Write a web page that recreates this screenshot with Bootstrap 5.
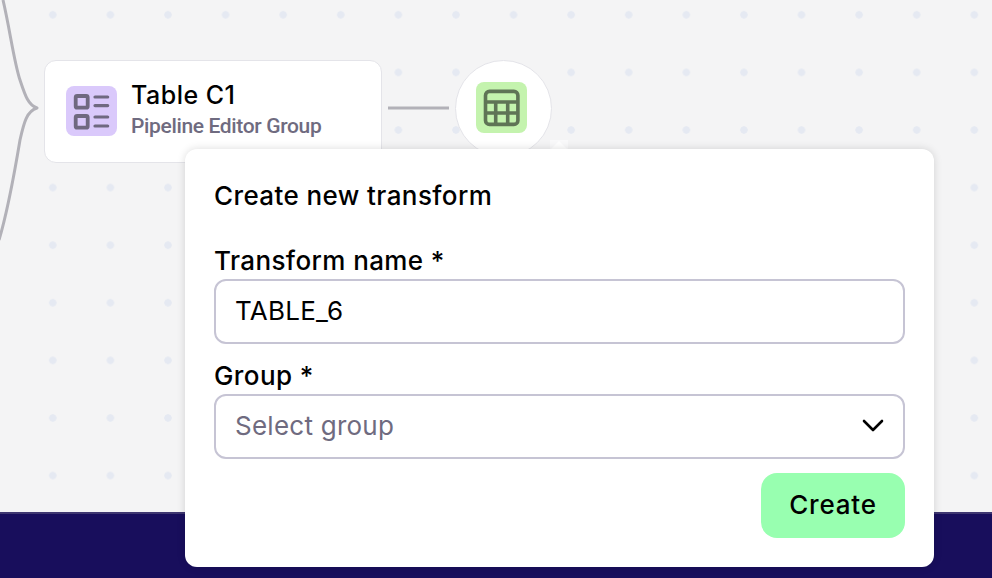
<!DOCTYPE html>
<html lang="en">
<head>
  <meta charset="UTF-8" />
  <meta name="viewport" content="width=device-width, initial-scale=1.0" />
  <title>Pipeline Editor</title>
  <link href="https://cdn.jsdelivr.net/npm/bootstrap@5.3.0/dist/css/bootstrap.min.css" rel="stylesheet">
  <style>
    html, body {
      height: 100%;
    }
    body {
      overflow: hidden;
      font-family: "Inter", "Liberation Sans", sans-serif;
      color: #000;
    }
    .editor-page {
      height: 578px;
    }
    .flow-canvas {
      position: relative;
      flex: 1 1 auto;
      background-color: #f4f4f5;
      background-image: radial-gradient(circle, #e5e9f2 3.4px, transparent 4px);
      background-size: 57.6px 57.6px;
      background-position: 24px -14px;
    }
    .footer-bar {
      flex: 0 0 66px;
      background: #180e5c;
      border-top: 2px solid #3e3670;
    }
    .edge-lines {
      position: absolute;
      left: 0;
      top: 0;
    }
    .table-node {
      position: absolute;
      left: 44px;
      top: 60px;
      width: 338px;
      height: 103px;
      padding-left: 21px;
      background: #fff;
      border: 1px solid #e4e4e9;
      border-radius: 12px;
    }
    .node-icon {
      flex: 0 0 51px;
      width: 51px;
      border-radius: 8px;
    }
    .icon-purple {
      height: 50px;
      margin-right: 14px;
      margin-bottom: 1px;
      background: #dac9fb;
    }
    .icon-green {
      height: 51px;
      margin-right: 4px;
      margin-bottom: 2px;
      background: #c4f3ae;
    }
    .node-title {
      font-size: 25px;
      font-weight: 500;
      line-height: 30px;
      letter-spacing: .5px;
      margin-bottom: 3px;
    }
    .node-sub {
      font-family: "Roboto", "Liberation Sans", sans-serif;
      font-size: 21px;
      font-weight: 500;
      line-height: 26px;
      color: #6f6b80;
      letter-spacing: -.35px;
    }
    .node-text {
      margin-bottom: 5px;
    }
    .add-circle {
      position: absolute;
      left: 455px;
      top: 60px;
      width: 97px;
      height: 97px;
      background: #fff;
      border: 1px solid #e4e4e9;
      border-radius: 50%;
    }
    .popup-arrow {
      position: absolute;
      left: 550px;
      top: 140px;
      width: 18px;
      height: 9px;
      background: #f9f9fa;
    }
    .popup-arrow::after {
      content: "";
      position: absolute;
      left: 1px;
      top: 1px;
      border-left: 8px solid transparent;
      border-right: 8px solid transparent;
      border-bottom: 8px solid #fff;
    }
    .transform-popup {
      position: absolute;
      left: 185px;
      top: 149px;
      width: 749px;
      height: 418px;
      padding: 30px 29px 0;
      background: #fff;
      border-radius: 12px;
      box-shadow: 0 0 8px rgba(0, 0, 0, .14);
    }
    .popup-title {
      font-size: 26px;
      font-weight: 500;
      line-height: 34px;
      letter-spacing: .4px;
      margin-bottom: 31px;
    }
    .field-label {
      display: block;
      font-size: 26px;
      font-weight: 500;
      line-height: 34px;
      letter-spacing: .4px;
      margin-bottom: 1px;
    }
    .field-input.form-control,
    .field-input.form-select {
      height: 65px;
      padding: 0 19px 2px;
      font-size: 26px;
      letter-spacing: .25px;
      color: #000;
      border: 2px solid #c6c4d4;
      border-radius: 12px;
      box-shadow: none;
      margin-bottom: 15px;
    }
    .field-input.form-select {
      color: #6f6b80;
      background-image: none;
    }
    .select-wrap {
      position: relative;
    }
    .select-chevron {
      position: absolute;
      right: 21px;
      top: 25px;
      pointer-events: none;
    }
    .btn-create.btn {
      width: 144px;
      height: 65px;
      margin-top: -1px;
      padding: 0 0 2px;
      font-size: 26px;
      font-weight: 500;
      letter-spacing: .8px;
      color: #000;
      background: #98ffb0;
      border: 0;
      border-radius: 16px;
    }
  </style>
</head>
<body>

<div class="editor-page d-flex flex-column">
  <div class="flow-canvas">
    <svg class="edge-lines" width="992" height="250" fill="none" stroke="#b2b1b8" stroke-width="3" stroke-linejoin="round">
      <path d="M3 0C10 30 14 62 20 80C25 95 28 105 37 108C27 111 24 122 20 140C15 170 8 210 -1 240" />
      <path d="M388 108H449" />
    </svg>

    <div class="table-node d-flex align-items-center">
      <div class="node-icon icon-purple">
        <svg class="d-block" width="51" height="50" viewBox="0 0 51 50" fill="none" stroke="#6f6880" stroke-linecap="round" stroke-linejoin="round">
          <rect x="9.7" y="10" width="12" height="11.7" rx="1.5" stroke-width="3.8" />
          <rect x="9.7" y="30" width="12" height="11.7" rx="1.5" stroke-width="3.8" />
          <path d="M29 11H41.7M29 19.6H41.7M29 31H41.7M29 40H41.7" stroke-width="3.2" />
        </svg>
      </div>
      <div class="node-text">
        <div class="node-title">Table C1</div>
        <div class="node-sub">Pipeline Editor Group</div>
      </div>
    </div>

    <div class="add-circle d-flex align-items-center justify-content-center">
      <div class="node-icon icon-green">
        <svg class="d-block" width="51" height="51" viewBox="0 0 51 51" fill="none" stroke="#5f7456" stroke-width="3.6" stroke-linejoin="round">
          <rect x="9.5" y="9.4" width="32.4" height="33" rx="4" />
          <path d="M9.5 20H41.9M9.5 31H41.9M19.7 20V42.4M31.7 20V42.4" />
        </svg>
      </div>
    </div>

    <div class="popup-arrow"></div>
  </div>
  <div class="footer-bar"></div>
</div>

<div class="transform-popup">
  <div class="popup-title">Create new transform</div>
  <form onsubmit="return false">
    <label class="field-label" for="transformName">Transform name *</label>
    <input type="text" id="transformName" class="form-control field-input" value="TABLE_6">
    <label class="field-label" for="groupSelect">Group *</label>
    <div class="select-wrap">
      <select id="groupSelect" class="form-select field-input">
        <option>Select group</option>
      </select>
      <svg class="select-chevron" width="22" height="14" viewBox="0 0 22 14" fill="none" stroke="#000" stroke-width="2.6" stroke-linecap="round" stroke-linejoin="round">
        <path d="M2 2L11 11L20 2" />
      </svg>
    </div>
    <div class="d-flex justify-content-end">
      <button type="submit" class="btn btn-create">Create</button>
    </div>
  </form>
</div>

<script src="https://cdn.jsdelivr.net/npm/bootstrap@5.3.0/dist/js/bootstrap.bundle.min.js"></script>
</body>
</html>
